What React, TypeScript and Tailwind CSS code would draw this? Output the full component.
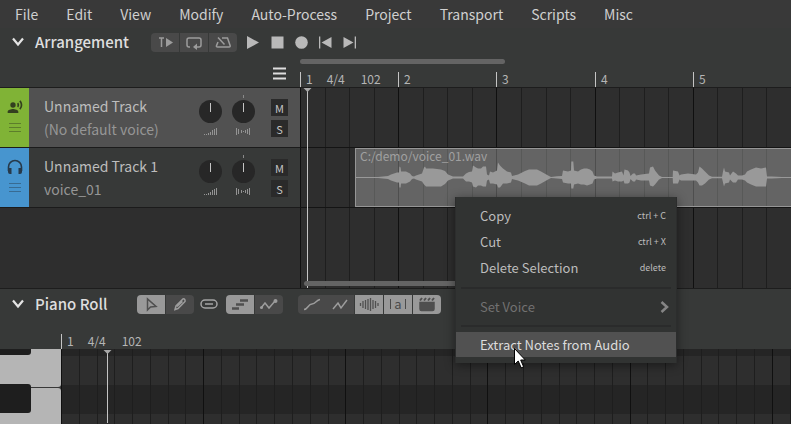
import type { ReactNode } from "react";
import { MdRecordVoiceOver } from "react-icons/md";

const BEAT = 24.55;
const BAR = BEAT * 4;
const SIXTEENTH = 17.77;

const MENUS = ["File", "Edit", "View", "Modify", "Auto-Process", "Project", "Transport", "Scripts", "Misc"];

/* Waveform envelope: x, height above the axis, height below the axis. */
const WAVE: [number, number, number][] = [
  [0, 0.5, 0.5], [22, 0.5, 0.5], [32, 1.5, 1.5], [35, 3, 3], [41, 5, 5], [43, 5, 5], [43.4, 11, 10], [44.6, 10, 10], [45, 6, 6],
  [50, 6, 6], [54, 4, 4], [56, 1.5, 1.5], [58, 1, 1], [60, 2, 2], [66, 4, 4], [68, 10, 7], [69, 11, 8], [70, 9, 9], [77, 9, 9], [85, 8, 9],
  [89, 6.5, 6.5], [92, 3, 3], [97, 1, 1], [107, 1, 1], [110, 4, 4], [113, 5.5, 4], [116, 6, 5], [117, 12, 9], [120, 10, 10],
  [122, 9, 8], [125, 9, 8], [127, 11, 9], [130, 11, 9], [131, 3, 3], [133, 2, 2], [134, 6, 6], [137, 5, 6], [141, 7, 7],
  [142, 15, 10], [144, 12, 10], [147, 9, 6], [151, 6, 6], [155, 5, 5], [156, 1.5, 1.5], [162, 3, 3], [169, 6.5, 6], [173, 8, 8],
  [181, 8, 8], [185, 6, 6], [193, 1.5, 1.5], [195, 0.6, 0.6], [201, 1.2, 1], [206, 1.5, 1.5], [207, 7, 5], [212, 6, 6],
  [215, 7, 6], [215.3, 16, 11], [217.3, 16, 11], [218, 7, 7], [222, 6, 6], [225, 8, 7], [228, 9, 7], [231, 9, 8], [234, 8, 7],
  [236.5, 6, 6], [238, 2, 2], [241, 1, 1], [256, 1, 1], [256.5, 6, 4], [259, 4, 3], [262, 5, 4], [266, 6, 4], [267.5, 2, 3],
  [268.5, 8, 6], [272, 7, 6], [273.5, 5, 5], [274.5, 1.5, 1.5], [277, 4, 4], [279, 4, 4], [280, 2, 2], [285, 3, 3], [293, 4, 3],
  [294, 10, 8], [297, 11, 9], [299, 7, 7], [303, 2, 2], [306, 0.6, 0.6], [316.7, 0.6, 0.6], [317, 7, 6], [322, 6, 6],
  [323.5, 2, 2], [325, 3, 3], [332, 4, 3], [340, 3, 3], [342, 5, 5], [343.5, 11, 8], [346, 9, 8], [349, 6, 6], [353, 2, 2],
  [356, 0.7, 0.7], [366, 0.7, 0.7], [367, 6, 5], [368, 10, 9], [369, 6, 6], [373, 5, 5], [374, 2, 2], [377, 6, 5], [380, 4, 5],
  [382, 2, 2], [386, 2, 2], [389, 3, 3], [391, 6, 5], [395, 8, 7], [400, 10, 9], [405, 9, 9], [410, 10, 9], [411, 1, 1],
  [416, 1, 1], [426, 0.5, 0.5], [1600, 0.5, 0.5],
];
const AXIS = 28.5;
const wavePoints = [
  ...WAVE.map(([x, up]) => `${x},${AXIS - up}`),
  ...[...WAVE].reverse().map(([x, , down]) => `${x},${AXIS + down}`),
].join(" ");

function GridLines({ step, major }: { step: number; major: number }) {
  return (
    <svg className="absolute inset-0 h-full w-full" shapeRendering="crispEdges" aria-hidden="true">
      {Array.from({ length: 120 }, (_, i) => (
        <rect
          key={i}
          x={Math.round(i * step)}
          y="0"
          width="1"
          height="100%"
          fill={i % major === 0 ? "#101010" : "#1e1e1e"}
        />
      ))}
    </svg>
  );
}

function Playhead() {
  return (
    <svg width="9" height="100%" className="absolute inset-y-0 w-[9px]" aria-hidden="true">
      <rect x="4" width="1" height="100%" fill="#c4c4c4" />
      <path d="M0.5 0h8L4.5 4z" fill="#a8a8a8" />
    </svg>
  );
}

function Section({ title, children }: { title: string; children: ReactNode }) {
  return (
    <div className="flex h-7 items-center">
      <button className="flex w-[151px] items-center gap-[11px] pl-3 text-[15px] leading-5 font-medium text-[#dedede]">
        <svg width="12" height="10" fill="none" stroke="#e4e4e4" strokeWidth="2.2" aria-hidden="true">
          <path d="M1 1.5l5 6 5-6" />
        </svg>
        {title}
      </button>
      {children}
    </div>
  );
}

function ToolButton({ label, active = false, children }: { label: string; active?: boolean; children: ReactNode }) {
  return (
    <button
      aria-label={label}
      aria-pressed={active}
      className={`flex h-[19px] w-7 items-center justify-center ${active ? "bg-[#999999] text-[#4f4f4f]" : "bg-[#494949] text-[#9c9c9c]"}`}
    >
      <svg width="20" height="15" fill="none" stroke="currentColor" strokeWidth="1.5" aria-hidden="true">
        {children}
      </svg>
    </button>
  );
}

function TransportButton({ label, children }: { label: string; children: ReactNode }) {
  return (
    <button aria-label={label} className="text-[#b9b9b9]">
      <svg width="13" height="13" fill="currentColor" className="block" aria-hidden="true">
        {children}
      </svg>
    </button>
  );
}

function Knob({ label, pan = false }: { label: string; pan?: boolean }) {
  return (
    <label className="relative block">
      <input type="range" aria-label={label} className="sr-only" />
      <svg width="23" height="42" className="block" aria-hidden="true">
        {pan && <rect x="11" y="0" width="1" height="3" fill="#8a8a8a" />}
        <circle cx="11.5" cy="16.5" r="11.5" fill="#272727" />
        <rect x="11" y="8" width="1" height="9" fill="#c4c4c4" />
        <g fill="#949494">
          {pan
            ? [[4, 33, 7], [6, 34, 5], [9, 35, 3], [11, 36, 1], [13, 35, 3], [15, 34, 5], [17, 33, 7]].map(([x, y, h]) => (
                <rect key={x} x={x} y={y} width="1" height={h} />
              ))
            : [1, 1, 2, 3, 5, 6, 7].map((h, i) => <rect key={i} x={5 + i * 2} y={40 - h} width="1" height={h} />)}
        </g>
      </svg>
    </label>
  );
}

function Track({ name, voice, kind }: { name: string; voice: string; kind: "vocal" | "audio" }) {
  const vocal = kind === "vocal";
  return (
    <div className={`flex h-[60px] border-b border-[#1b1b1b] ${vocal ? "bg-[#515151]" : "bg-[#373938]"}`}>
      <div
        className={`flex w-[29px] flex-col items-center gap-2 pt-[11px] ${vocal ? "bg-[#80b336] text-[#33401f]" : "bg-[#4795cf] text-[#27394a]"}`}
      >
        {vocal ? (
          <MdRecordVoiceOver size={16} />
        ) : (
          <svg width="16" height="16" fill="none" stroke="currentColor" strokeWidth="1.6" aria-hidden="true">
            <path d="M1.5 12V8a6.5 6.5 0 0 1 13 0v4" />
            <path d="M1 9h3.500v6H3a2 2 0 0 1-2-2zM15 9h-3.500v6H13a2 2 0 0 0 2-2z" fill="currentColor" stroke="none" />
          </svg>
        )}
        <svg width="12" height="9" stroke="currentColor" opacity="0.45" aria-hidden="true">
          <path d="M0 .5h12M0 4.500h12M0 8.500h12" />
        </svg>
      </div>
      <div className="flex-1 pt-[7px] pl-[15px] text-[14px] leading-[23px]">
        <div className="text-[#bdbdbd]">{name}</div>
        <div className="text-[#969696]">{voice}</div>
      </div>
      <div className="flex gap-[10px] pt-[7px]">
        <Knob label={`${name} volume`} />
        <Knob label={`${name} pan`} pan />
      </div>
      <div className="flex flex-col gap-1 pt-[11px] pr-3 pl-4 text-[11px] text-[#c4c4c4]">
        <button aria-label="Mute" className="flex h-[17px] w-[17px] items-center justify-center bg-[#2a2a2a] leading-4">M</button>
        <button aria-label="Solo" className="flex h-[17px] w-[17px] items-center justify-center bg-[#2a2a2a] leading-4">S</button>
      </div>
    </div>
  );
}

function MenuItem({ label, shortcut }: { label: string; shortcut: string }) {
  return (
    <button role="menuitem" className="flex h-[26px] w-full items-center justify-between pr-[10px] pl-6">
      <span>{label}</span>
      <span className="text-[9px]">{shortcut}</span>
    </button>
  );
}

function Separator() {
  return (
    <div role="separator" className="flex h-[13px] items-center px-[5px]">
      <div className="h-[2px] w-full bg-[#2a2b2b]" />
    </div>
  );
}

export default function App() {
  return (
    <div className="relative flex h-screen flex-col overflow-hidden bg-[#373938] font-['Noto_Sans_CJK_SC','Noto_Sans',sans-serif] text-[#c6c6c6] select-none">
      <nav className="flex h-7 shrink-0 items-center gap-7 bg-[#393939] pb-px pl-[15px] text-[14px] leading-5 text-[#d0d0d0]">
        {MENUS.map((m) => (
          <button key={m}>{m}</button>
        ))}
      </nav>

      <Section title="Arrangement">
        <div className="flex gap-px overflow-hidden rounded">
          <ToolButton label="Play from start marker">
            <path d="M4 3h5M6.500 3v9" />
            <path d="M11 3v9l7-4.500z" fill="currentColor" stroke="none" />
          </ToolButton>
          <ToolButton label="Loop">
            <path d="M6 12H5a2 2 0 0 1-2-2V5a2 2 0 0 1 2-2h10a2 2 0 0 1 2 2v5a2 2 0 0 1-2 2h-3" />
            <path d="M13 8.500v6.500l-4-3z" fill="currentColor" stroke="none" />
          </ToolButton>
          <ToolButton label="Metronome">
            <path d="M9 3h5.500l2.600 7.500q.4 1.500-1 1.500H4.500q-1.400 0-1-1.400L5 7M5 2.500l6.500 7" />
          </ToolButton>
        </div>
        <div className="flex gap-[11px] pl-[10px]">
          <TransportButton label="Play"><path d="M0 0v13l12-6.500z" /></TransportButton>
          <TransportButton label="Stop"><rect x=".5" y=".5" width="12" height="12" /></TransportButton>
          <TransportButton label="Record"><circle cx="6.500" cy="6.500" r="6.300" /></TransportButton>
          <TransportButton label="Previous"><path d="M0 .5h1.300v12H0zM12.500 1v11l-10-5.500z" /></TransportButton>
          <TransportButton label="Next"><path d="M11.700 .5H13v12h-1.300zM.5 1v11l10-5.500z" /></TransportButton>
        </div>
      </Section>

      <div className="flex h-[31px] shrink-0">
        <div className="flex w-[300px] items-start justify-end pt-[11px] pr-[14px]">
          <button aria-label="Track list options">
            <svg width="13" height="13" stroke="#dedede" strokeWidth="2" className="block" aria-hidden="true">
              <path d="M0 1.500h13M0 6.500h13M0 11.500h13" />
            </svg>
          </button>
        </div>
        <div className="min-w-0 flex-1 overflow-hidden pt-[3px]">
          <div className="h-[5px] w-[205px] rounded-full bg-[#646464]" />
          <div className="mt-2 flex text-[12px] leading-[14px] text-[#b5b5b5]">
            {[1, 2, 3, 4, 5].map((n) => (
              <div
                key={n}
                className="flex h-[15px] shrink-0 border-l border-[#c4c4c4] pl-[5px]"
                style={{ width: Math.round(n * BAR) - Math.round((n - 1) * BAR) }}
              >
                <span>{n}</span>
                {n === 1 && <span className="pl-[14px]">4/4</span>}
                {n === 1 && <span className="pl-4">102</span>}
              </div>
            ))}
          </div>
        </div>
      </div>

      <div className="flex h-[202px] shrink-0 border-y border-[#1d1d1d] bg-[#2e2e2e]">
        <div className="w-[300px] shrink-0">
          <Track name="Unnamed Track" voice="(No default voice)" kind="vocal" />
          <Track name="Unnamed Track 1" voice="voice_01" kind="audio" />
        </div>
        <div className="relative min-w-0 flex-1 overflow-hidden">
          <GridLines step={BEAT} major={4} />
          <div className="relative h-[60px] border-b border-[#141414]" />
          <div className="relative h-[60px] border-b border-[#141414] pl-[55px]">
            <div className="h-[59px] overflow-hidden border border-r-0 border-[#969696] bg-white/26">
              <div className="h-0 pl-1 text-[12px] leading-[14px] text-[#a0a0a0]">C:/demo/voice_01.wav</div>
              <svg width="100%" height="57" className="block" aria-label="Audio waveform">
                <polygon points={wavePoints} fill="#999999" />
              </svg>
            </div>
          </div>
          <div className="absolute inset-y-0 left-[3px]"><Playhead /></div>
          <div className="absolute bottom-[2px] left-1 h-[5px] w-[205px] rounded-full bg-[#646464]" />
        </div>
      </div>

      <div className="shrink-0 pt-px">
        <Section title="Piano Roll">
          <div className="-ml-[14px] flex gap-px overflow-hidden rounded">
            <ToolButton label="Pointer tool" active>
              <path d="M6.500 2v11l3-3 5.500-.5z" />
            </ToolButton>
            <ToolButton label="Pencil tool">
              <path d="M5 12.500l1-3.500 7-7q1.500-.5 2 1t-.5 2l-6.500 6.500zM7 9.500l5.500-5" />
            </ToolButton>
          </div>
          <button aria-label="Note links" className="pr-2 pl-[6px] text-[#a4a4a4]">
            <svg width="18" height="10" fill="none" stroke="currentColor" strokeWidth="1.500" className="block" aria-hidden="true">
              <rect x="1" y="1" width="16" height="8" rx="4" />
              <path d="M5 5h8" />
            </svg>
          </button>
          <div className="flex gap-px overflow-hidden rounded">
            <ToolButton label="Notes" active>
              <path d="M10 3.500h8M6 7.500h8M2 11.500h7" strokeWidth="2.500" />
            </ToolButton>
            <ToolButton label="Parameter points">
              <path d="M2 11l4-5 4 5 6-7" />
              <circle cx="2.500" cy="10.500" r="1.500" fill="currentColor" stroke="none" />
              <circle cx="16.500" cy="4" r="2" fill="currentColor" stroke="none" />
            </ToolButton>
          </div>
          <div className="ml-[15px] flex overflow-hidden rounded">
            <ToolButton label="Smooth curve">
              <path d="M2 12.500C6 12.500 6 7 10 7S14 3 18 2.500" />
            </ToolButton>
            <div className="flex gap-px">
              <ToolButton label="Pitch curve">
                <path d="M3 12l5-6 3 5 6-8" />
              </ToolButton>
              <ToolButton label="Waveform" active>
                <path d="M1.500 6v3M4 4v7M6.500 3v9M9 2v11M11.500 1v13M14 3v9M16.500 4v7M19 6v3" strokeWidth="1.300" />
              </ToolButton>
              <button aria-label="Phonemes" aria-pressed="true" className="flex h-[19px] w-7 items-center justify-center gap-[3px] bg-[#999999] pb-px text-[13px] leading-[18px] text-[#4a4a4a]">
                <span className="h-[10px] w-px bg-[#4a4a4a]" />
                <span>a</span>
                <span className="h-[10px] w-px bg-[#4a4a4a]" />
              </button>
              <ToolButton label="Takes" active>
                <path d="M3 5.500h14V12q0 1.500-1.500 1.500h-11Q3 13.500 3 12z" fill="currentColor" />
                <path d="M3 3.500l2-2.500M7 3.500L9 1M11 3.500L13 1M15 3.500L17 1" strokeWidth="2" />
              </ToolButton>
            </div>
          </div>
        </Section>
        <div className="flex h-[31px] items-end pl-[61px] text-[12px] leading-[14px] text-[#b5b5b5]">
          <div className="flex h-[15px] border-l border-[#c4c4c4] pl-[5px]">
            <span>1</span>
            <span className="pl-[14px]">4/4</span>
            <span className="pl-4">102</span>
          </div>
        </div>
      </div>

      <div className="flex min-h-0 flex-1 bg-[#2e2e2e]">
        <div className="flex w-[61px] shrink-0 flex-col gap-px overflow-hidden bg-[#383838]">
          <div className="h-[38px] shrink-0 rounded-br-[3px] bg-[#b5b5b5]">
            <div className="h-[6px] w-[31px] rounded-br-[3px] bg-[#1e1e1e]" />
          </div>
          <div className="flex flex-1 items-start rounded-tr-[3px] bg-[#b5b5b5]">
            <div className="-mt-1 h-[29px] w-[31px] rounded-r-[3px] bg-[#1e1e1e]" />
          </div>
        </div>
        <div className="relative min-w-0 flex-1 overflow-hidden">
          <div className="h-[7px] bg-[#252525]" />
          <div className="h-[29px]" />
          <div className="h-[29px] bg-[#252525]" />
          <GridLines step={SIXTEENTH} major={8} />
          <div className="absolute inset-y-px left-[42px]"><Playhead /></div>
        </div>
      </div>

      <div
        role="menu"
        className="absolute top-[197px] left-[455px] w-[222px] border-x border-[#2c2d2d] bg-[#313332] py-[6px] text-[13px] leading-5 text-[#bdbdbd] shadow-[0_2px_10px_rgba(0,0,0,0.45)]"
      >
        <MenuItem label="Copy" shortcut="ctrl + C" />
        <MenuItem label="Cut" shortcut="ctrl + X" />
        <MenuItem label="Delete Selection" shortcut="delete" />
        <Separator />
        <button role="menuitem" disabled className="flex h-[25px] w-full items-center justify-between pr-[7px] pl-6 text-[#717171]">
          <span>Set Voice</span>
          <svg width="9" height="12" fill="none" stroke="#858585" strokeWidth="2.500" aria-hidden="true">
            <path d="M1.500 1l5.500 5-5.500 5" />
          </svg>
        </button>
        <Separator />
        <button role="menuitem" className="flex h-[25px] w-full items-center bg-[#515151] pl-6 text-[#dcdcdc]">
          Extract Notes from Audio
        </button>
      </div>

      <svg width="13" height="22" className="absolute top-[347px] left-[513px]" aria-hidden="true">
        <path d="M1.500 1.500v16l3.700-3.500 3 6.800 2.400-1-2.900-6.800h4.600z" fill="#fff" stroke="#000" />
      </svg>
    </div>
  );
}
